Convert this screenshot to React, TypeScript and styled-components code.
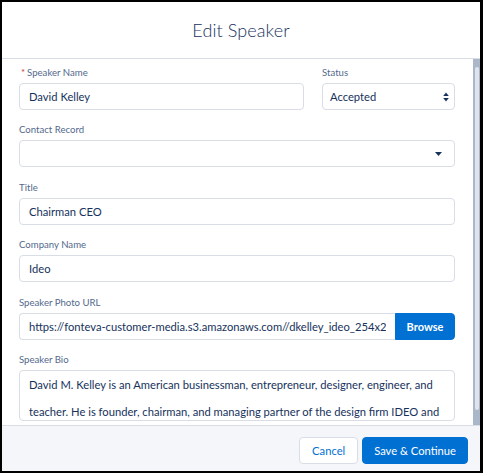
import React from "react";
import styled, { createGlobalStyle } from "styled-components";

const GlobalStyle = createGlobalStyle`
  html, body {
    margin: 0;
    padding: 0;
    background: #000;
  }
  body {
    font-family: Lato, "Open Sans", Arial, sans-serif;
  }
`;

const Modal = styled.div`
  width: 483px;
  height: 473px;
  box-sizing: border-box;
  border-style: solid;
  border-color: #000;
  border-width: 2px 3px 2px 2px;
  background: #fff;
  display: flex;
  flex-direction: column;
  overflow: hidden;
`;

const Header = styled.header`
  height: 56px;
  flex: none;
  display: flex;
  align-items: center;
  justify-content: center;
  border-bottom: 1px solid #d8dde6;
`;

const Title = styled.h2`
  margin: 0;
  font-size: 18px;
  font-weight: 300;
  color: #16325c;
  letter-spacing: 0.1px;
`;

const Body = styled.div`
  height: 366px;
  flex: none;
  display: flex;
`;

const Content = styled.div`
  flex: 1;
  overflow: hidden;
  padding: 8px 18px 0 17px;
  display: flex;
  flex-direction: column;
  gap: 14.4px;
`;

const Track = styled.div`
  width: 7px;
  flex: none;
  background: #aab7c8;
  padding: 8px 1px 15px 2px;
  box-sizing: border-box;
  display: flex;
`;

const Thumb = styled.div`
  flex: 1;
  background: #dfe4ec;
  border-radius: 3px;
`;

const Row = styled.div`
  display: grid;
  grid-template-columns: 1fr 133px;
  gap: 18px;
`;

const Field = styled.div`
  display: flex;
  flex-direction: column;
  gap: 4px;
`;

const Label = styled.label`
  font-size: 9.6px;
  line-height: 12px;
  color: #54698d;
  display: flex;
  align-items: center;
`;

const Required = styled.span`
  color: #c23934;
  margin: 0 2px 0 2px;
`;

const boxBase = `
  box-sizing: border-box;
  height: 27px;
  border: 1px solid #d8dde6;
  border-radius: 4px;
  background: #fff;
  color: #16325c;
  font-family: Lato, "Open Sans", Arial, sans-serif;
  font-size: 11.2px;
  outline: none;
`;

const Input = styled.input`
  ${boxBase}
  width: 100%;
  padding: 0 9px;
`;

const SelectBox = styled.div<{ $pad?: number }>`
  ${boxBase}
  display: flex;
  align-items: center;
  justify-content: space-between;
  padding: 0 ${(p) => p.$pad ?? 9}px 0 7px;
`;

const Group = styled.div`
  display: flex;
`;

const UrlInput = styled.input`
  ${boxBase}
  flex: 1;
  min-width: 0;
  padding: 0 9px;
  border-radius: 4px 0 0 4px;
  border-right: none;
`;

const BrowseButton = styled.button`
  height: 27px;
  width: 60px;
  flex: none;
  border: 1px solid #0070d2;
  border-radius: 0 4px 4px 0;
  background: #0070d2;
  color: #fff;
  font-family: Lato, "Open Sans", Arial, sans-serif;
  font-size: 11px;
  font-weight: 700;
`;

const Bio = styled.textarea`
  ${boxBase}
  height: 51px;
  width: 100%;
  padding: 0 14px 0 9px;
  line-height: 27px;
  resize: none;
  overflow: hidden;
`;

const Footer = styled.footer`
  flex: 1;
  border-top: 1px solid #d8dde6;
  background: #f4f6f9;
  display: flex;
  justify-content: flex-end;
  align-items: flex-start;
  gap: 4px;
  padding: 11px 12px 0 0;
`;

const Button = styled.button<{ $brand?: boolean }>`
  height: 27px;
  padding: 0 ${(p) => (p.$brand ? 11 : 12)}px;
  border-radius: 4px;
  border: 1px solid ${(p) => (p.$brand ? "#0070d2" : "#d8dde6")};
  background: ${(p) => (p.$brand ? "#0070d2" : "#fff")};
  color: ${(p) => (p.$brand ? "#fff" : "#0070d2")};
  font-family: Lato, "Open Sans", Arial, sans-serif;
  font-size: 11.2px;
`;

const SortIcon = () => (
  <svg width="6" height="10" viewBox="0 0 6 10">
    <path d="M3 0.5 L5.8 4 H0.2 Z" fill="#16325c" />
    <path d="M3 9.5 L5.8 6 H0.2 Z" fill="#16325c" />
  </svg>
);

const DownIcon = () => (
  <svg width="7" height="4" viewBox="0 0 7 4">
    <path d="M0 0 H7 L3.5 4 Z" fill="#16325c" />
  </svg>
);

const bio =
  "David M. Kelley is an American businessman, entrepreneur, designer, engineer, and teacher. He is founder, chairman, and managing partner of the design firm IDEO and a professor at Stanford University.";

const App = () => {
  return (
    <>
      <GlobalStyle />
      <Modal>
        <Header>
          <Title>Edit Speaker</Title>
        </Header>
        <Body>
          <Content>
            <Row>
              <Field>
                <Label>
                  <Required>*</Required>Speaker Name
                </Label>
                <Input defaultValue="David Kelley" />
              </Field>
              <Field>
                <Label>Status</Label>
                <SelectBox $pad={5}>
                  <span>Accepted</span>
                  <SortIcon />
                </SelectBox>
              </Field>
            </Row>
            <Field>
              <Label>Contact Record</Label>
              <SelectBox $pad={12}>
                <span />
                <DownIcon />
              </SelectBox>
            </Field>
            <Field>
              <Label>Title</Label>
              <Input defaultValue="Chairman CEO" />
            </Field>
            <Field>
              <Label>Company Name</Label>
              <Input defaultValue="Ideo" />
            </Field>
            <Field>
              <Label>Speaker Photo URL</Label>
              <Group>
                <UrlInput defaultValue="https://fonteva-customer-media.s3.amazonaws.com//dkelley_ideo_254x254.jpg" />
                <BrowseButton>Browse</BrowseButton>
              </Group>
            </Field>
            <Field>
              <Label>Speaker Bio</Label>
              <Bio defaultValue={bio} readOnly />
            </Field>
          </Content>
          <Track>
            <Thumb />
          </Track>
        </Body>
        <Footer>
          <Button>Cancel</Button>
          <Button $brand>Save &amp; Continue</Button>
        </Footer>
      </Modal>
    </>
  );
};

export default App;
